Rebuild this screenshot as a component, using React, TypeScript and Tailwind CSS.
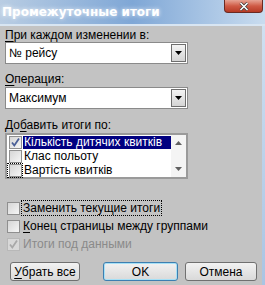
import React from "react";

const font = { fontFamily: '"Liberation Sans", Arial, sans-serif' };

function Check({ checked, disabled }: { checked?: boolean; disabled?: boolean }) {
  return (
    <div
      className={
        "w-[13px] h-[13px] border flex items-center justify-center shrink-0 " +
        (disabled
          ? "border-[#b8b8b8] bg-[#d8d8d8]"
          : "border-[#8f8f8f] bg-gradient-to-br from-[#d6d6d6] to-[#f6f6f6]")
      }
    >
      {checked && (
        <svg width="11" height="11" viewBox="0 0 11 11">
          <path
            d="M2 5.5 L4.3 8.5 L9 1.5"
            fill="none"
            stroke={disabled ? "#a8a8a8" : "#4a5f97"}
            strokeWidth="1.8"
          />
        </svg>
      )}
    </div>
  );
}

function Combo({ value }: { value: string }) {
  return (
    <div className="ml-[5px] w-[183px] h-[22px] border border-[#8a8a8a] bg-white flex items-center">
      <div className="flex-1 pl-[3px] text-[12px] text-black leading-none">{value}</div>
      <div className="w-[15px] h-[18px] mr-[1px] border border-[#6e6e6e] bg-gradient-to-b from-[#f4f4f4] to-[#d4d4d4] flex items-center justify-center">
        <svg width="7" height="4" viewBox="0 0 7 4">
          <path d="M0 0 H7 L3.5 4 Z" fill="#000" />
        </svg>
      </div>
    </div>
  );
}

function Btn({ children, primary, w }: { children: React.ReactNode; primary?: boolean; w: string }) {
  return (
    <div
      className={
        "h-[19px] rounded-[3px] border flex items-center justify-center text-[12px] text-black bg-gradient-to-b from-[#f2f2f2] to-[#d9d9d9] " +
        (primary ? "border-[#3c7fb1] shadow-[inset_0_0_0_1px_#a6e0f6]" : "border-[#707070]") +
        " " +
        w
      }
    >
      {children}
    </div>
  );
}

export default function App() {
  return (
    <div className="w-[265px] h-[285px] flex flex-col overflow-hidden bg-[#c3c3c3]" style={font}>
      {/* Title bar */}
      <div className="h-[26px] relative bg-gradient-to-r from-[#b9cde3] via-[#7fa7d6] to-[#c9dcef] border-b-2 border-[#d8e5f2] flex items-center">
        <span
          className="pl-[2px] text-[12px] font-bold text-white [text-shadow:0_0_4px_rgba(255,255,255,0.9)] leading-none"
          style={{ fontFamily: '"DejaVu Sans", sans-serif' }}
        >
          Промежуточные итоги
        </span>
        <div className="absolute left-[224px] top-0 w-[39px] h-[13px] rounded-b-[4px] border border-[#6b2a22] border-t-0 bg-gradient-to-b from-[#e6a394] via-[#cf5a45] to-[#b63a25] flex items-center justify-center">
          <svg width="10" height="9" viewBox="0 0 10 9">
            <path d="M1.5 1 L8.5 8 M8.5 1 L1.5 8" stroke="#3a3a3a" strokeWidth="3" />
            <path d="M1.5 1 L8.5 8 M8.5 1 L1.5 8" stroke="#fff" strokeWidth="1.6" />
          </svg>
        </div>
      </div>

      <div className="flex flex-1">
        <div className="w-[262px] flex flex-col text-[12px] text-black">
          <div className="ml-[5px] mt-[3px] h-[13px] leading-[13px]">
            <span className="underline underline-offset-2">П</span>ри каждом изменении в:
          </div>
          <Combo value="№ рейсу" />
          <div className="ml-[5px] mt-[9px] h-[13px] leading-[13px]">
            <span className="underline underline-offset-2">О</span>перация:
          </div>
          <div className="mt-[1px]">
            <Combo value="Максимум" />
          </div>
          <div className="ml-[5px] mt-[10px] h-[13px] leading-[13px]">
            До<span className="underline underline-offset-2">б</span>авить итоги по:
          </div>

          {/* Listbox */}
          <div className="ml-[5px] mt-[1px] w-[183px] h-[46px] border-2 border-[#9a9a9a] bg-white flex">
            <div className="flex-1 flex flex-col">
              <div className="h-[14px] flex items-center">
                <div className="ml-[1px] w-[15px] flex items-center justify-center">
                  <Check checked />
                </div>
                <div className="flex-1 h-[13px] bg-[#000080] text-white pl-[1px] leading-[13px] whitespace-nowrap">
                  Кількість дитячих квитків
                </div>
              </div>
              <div className="h-[14px] flex items-center">
                <div className="ml-[1px] w-[15px] flex items-center justify-center">
                  <Check />
                </div>
                <div className="flex-1 pl-[1px] leading-[13px] whitespace-nowrap">Клас польоту</div>
              </div>
              <div className="h-[14px] flex items-center">
                <div className="w-[16px] h-[15px] border border-dotted border-black flex items-center justify-center">
                  <Check />
                </div>
                <div className="flex-1 pl-[1px] leading-[13px] whitespace-nowrap">Вартість квитків</div>
              </div>
            </div>
            <div className="w-[15px] bg-[#f4f4f4] flex flex-col items-center justify-between py-[6px]">
              <svg width="7" height="4" viewBox="0 0 7 4">
                <path d="M3.5 0 L7 4 H0 Z" fill="#606060" />
              </svg>
              <svg width="7" height="4" viewBox="0 0 7 4">
                <path d="M0 0 H7 L3.5 4 Z" fill="#606060" />
              </svg>
            </div>
          </div>

          {/* Checkboxes */}
          <div className="ml-[7px] mt-[21px] h-[16px] flex items-center gap-[1px]">
            <Check />
            <div className="px-[1px] h-[16px] border border-dotted border-black leading-[14px]">
              Заменить текущие итоги
            </div>
          </div>
          <div className="ml-[7px] mt-[2px] h-[16px] flex items-center gap-[3px]">
            <Check />
            <div>
              <span className="underline underline-offset-2">К</span>онец страницы между группами
            </div>
          </div>
          <div className="ml-[7px] mt-[2px] h-[16px] flex items-center gap-[3px]">
            <Check checked disabled />
            <div className="text-[#8a8a8a]">Итоги под данными</div>
          </div>

          {/* Buttons */}
          <div className="mt-[10px] flex items-center pl-[10px]">
            <Btn w="w-[70px]">
              <span className="underline underline-offset-2">У</span>брать все
            </Btn>
            <div className="ml-[23px]">
              <Btn w="w-[75px]" primary>
                OK
              </Btn>
            </div>
            <div className="ml-[7px]">
              <Btn w="w-[72px]">Отмена</Btn>
            </div>
          </div>
        </div>
        <div className="w-[3px] bg-gradient-to-b from-[#cfe0f1] to-[#a9c4e3]" />
      </div>
    </div>
  );
}
